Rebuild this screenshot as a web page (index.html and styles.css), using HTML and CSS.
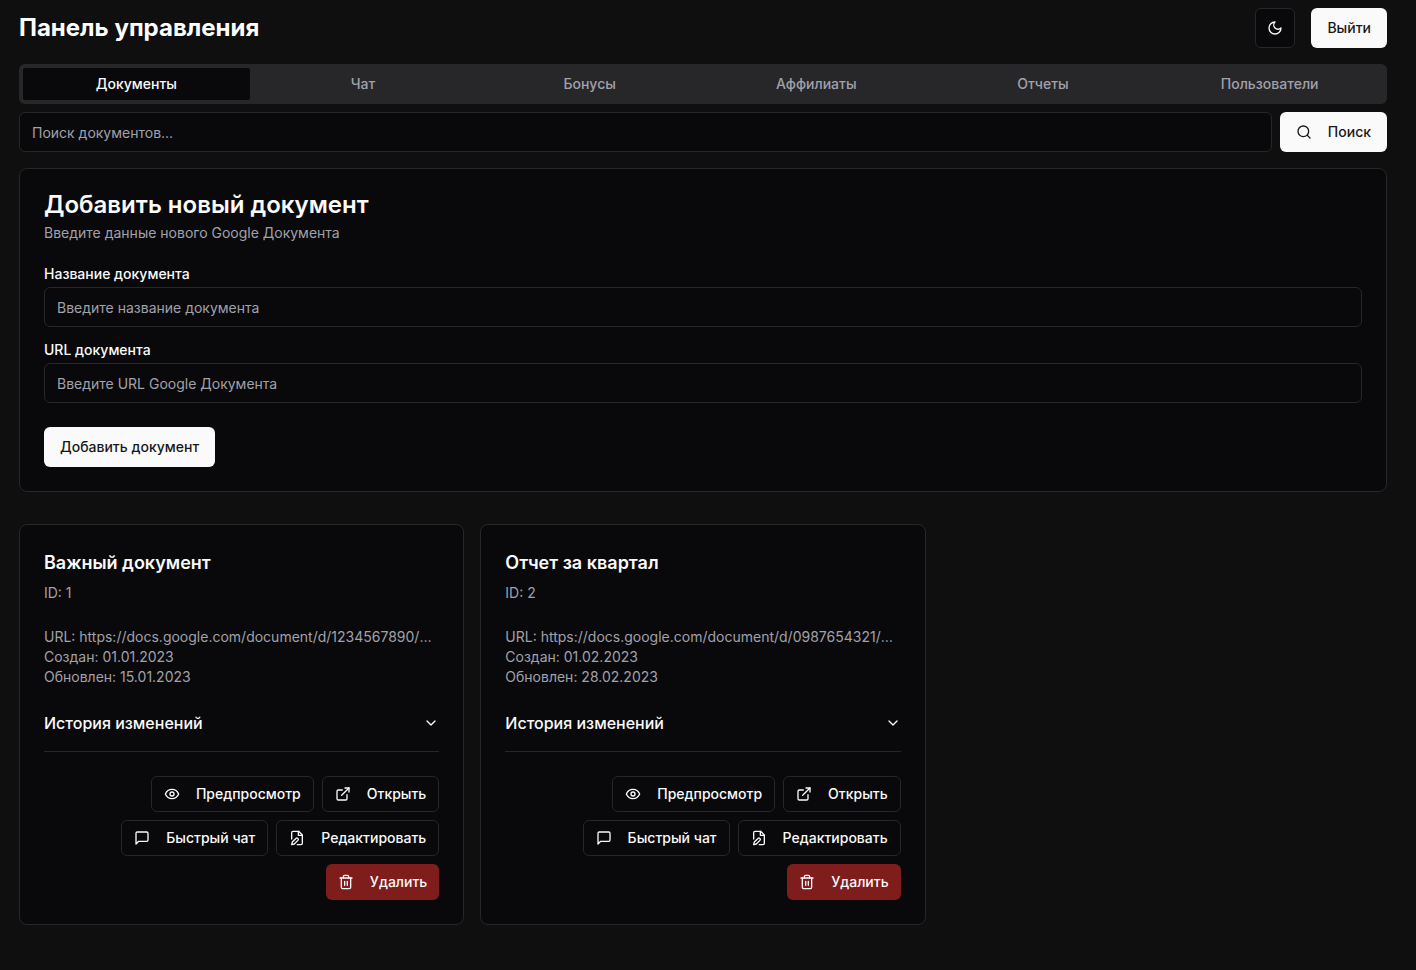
FILE: index.html
```
<!DOCTYPE html>
<html lang="ru">
<head>
<meta charset="utf-8">
<meta name="viewport" content="width=device-width, initial-scale=1">
<title>Панель управления</title>
<link rel="stylesheet" href="styles.css">
</head>
<body>
<svg class="sprite" aria-hidden="true">
  <symbol id="moon" viewBox="0 0 24 24"><path d="M12 3a6 6 0 0 0 9 9 9 9 0 1 1-9-9Z"/></symbol>
  <symbol id="search" viewBox="0 0 24 24"><circle cx="11" cy="11" r="8"/><path d="m21 21-4.3-4.3"/></symbol>
  <symbol id="chevron" viewBox="0 0 24 24"><path d="m6 9 6 6 6-6"/></symbol>
  <symbol id="eye" viewBox="0 0 24 24"><path d="M2 12s3-7 10-7 10 7 10 7-3 7-10 7-10-7-10-7Z"/><circle cx="12" cy="12" r="3"/></symbol>
  <symbol id="external" viewBox="0 0 24 24"><path d="M15 3h6v6"/><path d="M10 14 21 3"/><path d="M18 13v6a2 2 0 0 1-2 2H5a2 2 0 0 1-2-2V8a2 2 0 0 1 2-2h6"/></symbol>
  <symbol id="message" viewBox="0 0 24 24"><path d="M21 15a2 2 0 0 1-2 2H7l-4 4V5a2 2 0 0 1 2-2h14a2 2 0 0 1 2 2z"/></symbol>
  <symbol id="file-pen" viewBox="0 0 24 24"><path d="M4 13.5V4a2 2 0 0 1 2-2h8.500L20 7.500V20a2 2 0 0 1-2 2h-5.500"/><path d="M14 2v6h6"/><path d="M10.420 12.610a2.100 2.100 0 1 1 2.970 2.970L7.950 21 4 22l.990-3.950 5.430-5.440Z"/></symbol>
  <symbol id="trash" viewBox="0 0 24 24"><path d="M3 6h18"/><path d="M19 6v14c0 1-1 2-2 2H7c-1 0-2-1-2-2V6"/><path d="M8 6V4c0-1 1-2 2-2h4c1 0 2 1 2 2v2"/><path d="M10 11v6M14 11v6"/></symbol>
</svg>
<div class="page">
  <header class="topbar">
    <h1 class="page-title">Панель управления</h1>
    <div class="topbar-actions">
      <button class="btn btn-icon" type="button" aria-label="Переключить тему"><svg class="icon"><use href="#moon"/></svg></button>
      <button class="btn btn-primary" type="button">Выйти</button>
    </div>
  </header>

  <div class="tabs" role="tablist">
    <button class="tab tab-active" type="button" role="tab" aria-selected="true">Документы</button>
    <button class="tab" type="button" role="tab" aria-selected="false">Чат</button>
    <button class="tab" type="button" role="tab" aria-selected="false">Бонусы</button>
    <button class="tab" type="button" role="tab" aria-selected="false">Аффилиаты</button>
    <button class="tab" type="button" role="tab" aria-selected="false">Отчеты</button>
    <button class="tab" type="button" role="tab" aria-selected="false">Пользователи</button>
  </div>

  <main>
    <form class="search">
      <input class="input" type="search" placeholder="Поиск документов..." aria-label="Поиск документов">
      <button class="btn btn-primary" type="button"><svg class="icon"><use href="#search"/></svg>Поиск</button>
    </form>

    <section class="card">
      <h2 class="form-title">Добавить новый документ</h2>
      <p class="muted">Введите данные нового Google Документа</p>
      <form class="form">
        <div class="field">
          <label class="label" for="doc-name">Название документа</label>
          <input class="input" id="doc-name" type="text" placeholder="Введите название документа">
        </div>
        <div class="field">
          <label class="label" for="doc-url">URL документа</label>
          <input class="input" id="doc-url" type="text" placeholder="Введите URL Google Документа">
        </div>
        <button class="btn btn-primary form-submit" type="button">Добавить документ</button>
      </form>
    </section>

    <div class="docs">
      <article class="card">
        <h3 class="doc-title">Важный документ</h3>
        <p class="muted">ID: 1</p>
        <div class="doc-info">
          <p class="muted doc-url">URL: https://docs.google.com/document/d/1234567890/edit</p>
          <p class="muted">Создан: 01.01.2023</p>
          <p class="muted">Обновлен: 15.01.2023</p>
        </div>
        <button class="history" type="button" aria-expanded="false">История изменений<svg class="icon"><use href="#chevron"/></svg></button>
        <div class="doc-actions">
          <button class="btn btn-small" type="button"><svg class="icon"><use href="#eye"/></svg>Предпросмотр</button>
          <button class="btn btn-small" type="button"><svg class="icon"><use href="#external"/></svg>Открыть</button>
          <button class="btn btn-small" type="button"><svg class="icon"><use href="#message"/></svg>Быстрый чат</button>
          <button class="btn btn-small" type="button"><svg class="icon"><use href="#file-pen"/></svg>Редактировать</button>
          <button class="btn btn-small btn-danger" type="button"><svg class="icon"><use href="#trash"/></svg>Удалить</button>
        </div>
      </article>

      <article class="card">
        <h3 class="doc-title">Отчет за квартал</h3>
        <p class="muted">ID: 2</p>
        <div class="doc-info">
          <p class="muted doc-url">URL: https://docs.google.com/document/d/0987654321/edit</p>
          <p class="muted">Создан: 01.02.2023</p>
          <p class="muted">Обновлен: 28.02.2023</p>
        </div>
        <button class="history" type="button" aria-expanded="false">История изменений<svg class="icon"><use href="#chevron"/></svg></button>
        <div class="doc-actions">
          <button class="btn btn-small" type="button"><svg class="icon"><use href="#eye"/></svg>Предпросмотр</button>
          <button class="btn btn-small" type="button"><svg class="icon"><use href="#external"/></svg>Открыть</button>
          <button class="btn btn-small" type="button"><svg class="icon"><use href="#message"/></svg>Быстрый чат</button>
          <button class="btn btn-small" type="button"><svg class="icon"><use href="#file-pen"/></svg>Редактировать</button>
          <button class="btn btn-small btn-danger" type="button"><svg class="icon"><use href="#trash"/></svg>Удалить</button>
        </div>
      </article>
    </div>
  </main>
</div>
</body>
</html>
```
FILE: styles.css
```
*, *::before, *::after { box-sizing: border-box; }

body {
  margin: 0;
  background: #0f0f0f;
  color: #fafafa;
  font-family: Inter, "Liberation Sans", sans-serif;
  font-size: 14px;
  line-height: 20px;
}

h1, h2, h3, p { margin: 0; }
button, input { font: inherit; color: inherit; }
button { cursor: pointer; }

.sprite { display: none; }

.icon {
  width: 16px;
  height: 16px;
  flex: none;
  fill: none;
  stroke: currentColor;
  stroke-width: 2;
  stroke-linecap: round;
  stroke-linejoin: round;
}

.page { padding: 8px 29px 32px 19px; }

.topbar {
  display: flex;
  justify-content: space-between;
  align-items: center;
  margin-bottom: 16px;
}
.topbar-actions { display: flex; gap: 16px; }
.page-title { font-size: 24px; line-height: 32px; font-weight: 700; color: #fff; }

.btn {
  display: inline-flex;
  align-items: center;
  justify-content: center;
  gap: 16px;
  height: 40px;
  padding: 0 16px;
  border: 0;
  border-radius: 6px;
  font-weight: 500;
  white-space: nowrap;
}
.btn-primary { background: #fafafa; color: #18181b; }
.btn-icon {
  width: 40px;
  padding: 0;
  border: 1px solid #27272a;
  background: #09090b;
}
.btn-small {
  height: 36px;
  padding: 0 12px;
  border: 1px solid #27272a;
  background: #09090b;
}
.btn-danger { border: 0; background: #7f1d1d; }

.tabs {
  display: grid;
  grid-template-columns: repeat(6, 1fr);
  padding: 4px;
  margin-bottom: 8px;
  border-radius: 6px;
  background: #27272a;
}
.tab {
  height: 32px;
  border: 0;
  border-radius: 2px;
  background: none;
  color: #a1a1aa;
  font-weight: 500;
}
.tab-active { background: #09090b; color: #fafafa; }

.search { display: flex; gap: 8px; margin-bottom: 16px; }

.input {
  width: 100%;
  min-width: 0;
  height: 40px;
  padding: 0 12px;
  border: 1px solid #27272a;
  border-radius: 6px;
  background: #09090b;
  appearance: none;
}
.input::placeholder { color: #a1a1aa; opacity: 1; }

.card {
  min-width: 0;
  padding: 24px;
  border: 1px solid #27272a;
  border-radius: 8px;
  background: #09090b;
}
.muted { color: #a1a1aa; }

.form-title { margin-bottom: 6px; font-size: 24px; line-height: 24px; font-weight: 600; }
.form { display: flex; flex-direction: column; gap: 16px; margin-top: 24px; }
.field { display: flex; flex-direction: column; gap: 6px; }
.label { line-height: 14px; font-weight: 500; }
.form-submit { align-self: flex-start; margin-top: 8px; }

.docs {
  display: grid;
  grid-template-columns: repeat(3, 1fr);
  gap: 16px;
  margin-top: 32px;
}
.doc-title { margin-bottom: 6px; font-size: 18px; line-height: 28px; font-weight: 600; }
.doc-info { margin-top: 24px; }
.doc-url { overflow: hidden; text-overflow: ellipsis; white-space: nowrap; }

.history {
  display: flex;
  justify-content: space-between;
  align-items: center;
  width: 100%;
  margin-top: 8px;
  padding: 16px 0;
  border: 0;
  border-bottom: 1px solid #27272a;
  background: none;
  font-size: 16px;
  line-height: 24px;
  font-weight: 500;
}

.doc-actions {
  display: flex;
  flex-wrap: wrap;
  justify-content: flex-end;
  gap: 8px;
  margin-top: 24px;
}
```
